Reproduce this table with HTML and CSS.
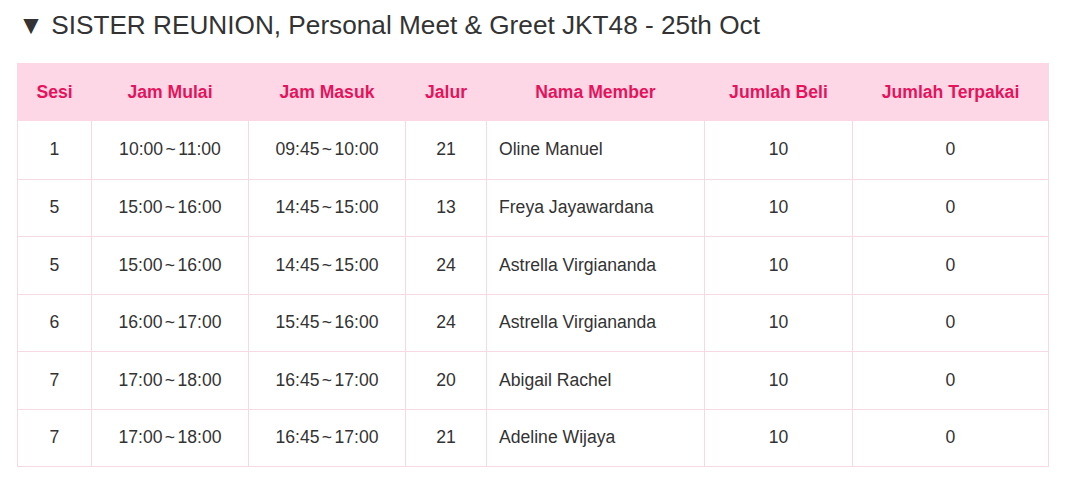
FILE: index.html
```html
<!DOCTYPE html>
<html>
<head>
<meta charset="utf-8">
<link rel="stylesheet" href="styles.css">
</head>
<body>
<div class="page">
  <h2 class="title">▼ SISTER REUNION, Personal Meet &amp; Greet JKT48 - 25th Oct</h2>
  <table class="tbl">
    <colgroup>
      <col class="c-sesi"><col class="c-mulai"><col class="c-masuk"><col class="c-jalur"><col class="c-nama"><col class="c-beli"><col class="c-pakai">
    </colgroup>
    <thead>
      <tr><th>Sesi</th><th>Jam Mulai</th><th>Jam Masuk</th><th>Jalur</th><th>Nama Member</th><th>Jumlah Beli</th><th>Jumlah Terpakai</th></tr>
    </thead>
    <tbody>
      <tr><td>1</td><td class="time">10:00 ~ 11:00</td><td class="time">09:45 ~ 10:00</td><td>21</td><td class="name">Oline Manuel</td><td>10</td><td>0</td></tr>
      <tr><td>5</td><td class="time">15:00 ~ 16:00</td><td class="time">14:45 ~ 15:00</td><td>13</td><td class="name">Freya Jayawardana</td><td>10</td><td>0</td></tr>
      <tr><td>5</td><td class="time">15:00 ~ 16:00</td><td class="time">14:45 ~ 15:00</td><td>24</td><td class="name">Astrella Virgiananda</td><td>10</td><td>0</td></tr>
      <tr><td>6</td><td class="time">16:00 ~ 17:00</td><td class="time">15:45 ~ 16:00</td><td>24</td><td class="name">Astrella Virgiananda</td><td>10</td><td>0</td></tr>
      <tr><td>7</td><td class="time">17:00 ~ 18:00</td><td class="time">16:45 ~ 17:00</td><td>20</td><td class="name">Abigail Rachel</td><td>10</td><td>0</td></tr>
      <tr><td>7</td><td class="time">17:00 ~ 18:00</td><td class="time">16:45 ~ 17:00</td><td>21</td><td class="name">Adeline Wijaya</td><td>10</td><td>0</td></tr>
    </tbody>
  </table>
</div>
</body>
</html>
```
FILE: styles.css
```css
html, body {
  margin: 0;
  padding: 0;
  background: #fff;
}
body {
  font-family: "Liberation Sans", Arial, sans-serif;
  color: #333;
}
.page {
  padding: 10px 20px 0 17px;
}
.title {
  margin: 0 0 22px 1px;
  font-size: 26.2px;
  font-weight: normal;
  line-height: 31px;
  color: #333;
}
.tbl {
  width: 1031px;
  border-collapse: collapse;
  table-layout: fixed;
  font-size: 17.6px;
}
.c-sesi { width: 74px; }
.c-mulai { width: 157px; }
.c-masuk { width: 157px; }
.c-jalur { width: 81px; }
.c-nama { width: 218px; }
.c-beli { width: 148px; }
.c-pakai { width: 196px; }
.tbl th {
  background: #fdd7e6;
  color: #e8125c;
  font-weight: bold;
  height: 56px;
  padding: 0 6px;
  text-align: center;
  border: 1px solid #fdd7e6;
}
.tbl td {
  height: 56.5px;
  padding: 0 6px;
  text-align: center;
  border: 1px solid #f7d9e4;
}
.tbl tbody tr:first-child td {
  height: 57.5px;
}
.tbl td.time {
  word-spacing: -2.5px;
}
.tbl td.name {
  text-align: left;
  padding-left: 12px;
}
```
